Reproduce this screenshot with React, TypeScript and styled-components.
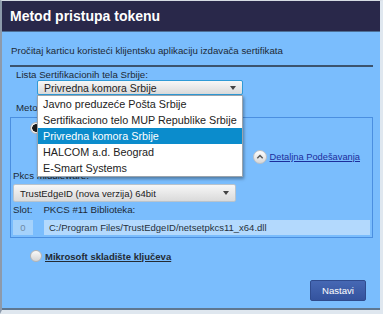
import styled, { createGlobalStyle } from "styled-components";

const GlobalStyle = createGlobalStyle`
  html, body {
    margin: 0;
    padding: 0;
    background: #c8d0da;
  }
  * {
    box-sizing: border-box;
  }
`;

const StyledDialog = styled.section`
  width: 383px;
  height: 314px;
  display: flex;
  flex-direction: column;
  background-color: #7abdfd;
  border-top: 1px solid #d6dce4;
  border-left: 2px solid #8d9aab;
  border-right: 3px solid #dfe7ef;
  border-bottom: 4px solid #dfe7ef;
  box-shadow: inset 0 -2px 0 #5f7790;
  font-family: "Liberation Sans", Arial, sans-serif;
  font-size: 9.7px;
  color: #1d2a36;
`;

const StyledTitleBar = styled.header`
  height: 31px;
  flex-shrink: 0;
  display: flex;
  align-items: center;
  padding-left: 8px;
  background-color: #29284a;
  border-bottom: 1px solid #4d6f96;
  color: #fff;
  font-weight: bold;
  font-size: 14px;
`;

const StyledBody = styled.div`
  flex: 1;
  display: flex;
  flex-direction: column;
  padding: 13px 8px 0 8px;
`;

const StyledIntro = styled.p`
  margin: 0 0 0 1px;
  line-height: 12px;
`;

const StyledDivider = styled.hr`
  margin: 8px 0 0 0;
  width: 363px;
  border: none;
  border-top: 2px solid #3b536e;
`;

const StyledLabel = styled.div<{ $indent?: number; $top?: number; $lh?: number }>`
  margin-left: ${(p) => p.$indent ?? 0}px;
  margin-top: ${(p) => p.$top ?? 0}px;
  line-height: ${(p) => p.$lh ?? 12}px;
  white-space: nowrap;
`;

const StyledSelectWrap = styled.div<{ $indent: number; $width: number; $top?: number }>`
  position: relative;
  margin-left: ${(p) => p.$indent}px;
  margin-top: ${(p) => p.$top ?? 0}px;
  width: ${(p) => p.$width}px;
`;

const StyledSelect = styled.div<{ $focused?: boolean; $height: number; $size: number }>`
  height: ${(p) => p.$height}px;
  display: flex;
  align-items: center;
  justify-content: space-between;
  padding: 0 5px 0 6px;
  background: linear-gradient(#f7f7f7, #dadada);
  border: 1px solid ${(p) => (p.$focused ? "#2f9ad6" : "#b9c3cc")};
  border-radius: 2px;
  color: #222;
  font-size: ${(p) => p.$size}px;
`;

const StyledArrow = styled.span`
  width: 0;
  height: 0;
  border-left: 3px solid transparent;
  border-right: 3px solid transparent;
  border-top: 4px solid #444;
  margin-right: 1px;
`;

const StyledList = styled.ul`
  position: absolute;
  z-index: 5;
  top: 100%;
  left: 0;
  width: 206px;
  margin: 0;
  padding: 0;
  list-style: none;
  background-color: #fff;
  border: 1px solid #9aa4ad;
  box-shadow: 1px 2px 3px rgba(0, 0, 0, 0.35);
  font-size: 10.8px;
`;

const StyledOption = styled.li<{ $selected?: boolean }>`
  height: 16px;
  line-height: 16px;
  padding-left: 5px;
  white-space: nowrap;
  background-color: ${(p) => (p.$selected ? "#0b8ccc" : "transparent")};
  color: ${(p) => (p.$selected ? "#fff" : "#222")};
`;

const StyledFieldset = styled.div`
  margin-top: 3px;
  width: 363px;
  border: 1px solid #4b8fe0;
  display: flex;
  flex-direction: column;
  padding: 4px 0 2px 2px;
`;

const StyledRadio = styled.span<{ $checked?: boolean }>`
  width: 12px;
  height: 12px;
  border-radius: 50%;
  flex-shrink: 0;
  background: ${(p) =>
    p.$checked
      ? "radial-gradient(circle, #1a1a1a 0 3.5px, #f2f2f2 4px)"
      : "linear-gradient(#fafafa, #d4d4d4)"};
  border: 1px solid #b5b5b5;
`;

const StyledRadioRow = styled.div<{ $indent: number; $top?: number }>`
  display: flex;
  align-items: center;
  gap: 3px;
  margin-left: ${(p) => p.$indent}px;
  margin-top: ${(p) => p.$top ?? 0}px;
  height: 12px;
`;

const StyledRadioLabel = styled.span`
  font-weight: bold;
  font-size: 9.5px;
  text-decoration: underline;
  color: #232a33;
`;

const StyledLinkRow = styled.div`
  display: flex;
  justify-content: flex-end;
  align-items: center;
  gap: 3px;
  margin-top: 16px;
  padding-right: 12px;
  height: 14px;
`;

const StyledLink = styled.a`
  color: #1c2d9c;
  font-size: 9.3px;
  text-decoration: underline;
`;

const StyledFieldRow = styled.div<{ $top: number }>`
  display: flex;
  gap: 11px;
  margin-top: ${(p) => p.$top}px;
`;

const StyledInput = styled.div<{ $width: number; $light?: boolean }>`
  width: ${(p) => p.$width}px;
  height: 15px;
  line-height: 15px;
  padding-left: ${(p) => (p.$light ? 0 : 5)}px;
  text-align: ${(p) => (p.$light ? "center" : "left")};
  background-color: ${(p) => (p.$light ? "#a5d2fb" : "#b3d9fd")};
  color: ${(p) => (p.$light ? "#6f8aa6" : "#25303b")};
  font-size: 9.5px;
  white-space: nowrap;
  overflow: hidden;
`;

const StyledFooter = styled.div`
  margin-top: auto;
  margin-bottom: 9px;
  display: flex;
  justify-content: flex-end;
  padding-right: 6px;
`;

const StyledButton = styled.button`
  width: 56px;
  height: 21px;
  border: 1px solid #2f4b8e;
  border-radius: 2px;
  background: linear-gradient(#4668b4, #34539e);
  color: #fff;
  font-family: "Liberation Sans", Arial, sans-serif;
  font-size: 9.6px;
  padding: 0;
`;

const UpIcon = () => (
  <svg width="14" height="14" viewBox="0 0 14 14">
    <defs>
      <linearGradient id="upg" x1="0" y1="0" x2="0" y2="1">
        <stop offset="0" stopColor="#ffffff" />
        <stop offset="1" stopColor="#d6d6d6" />
      </linearGradient>
    </defs>
    <circle cx="7" cy="7" r="6.5" fill="url(#upg)" stroke="#b8bec6" />
    <path d="M4.3 8.3 L7 5.6 L9.7 8.3" fill="none" stroke="#555" strokeWidth="1.4" />
  </svg>
);

const options = [
  "Javno preduzeće Pošta Srbije",
  "Sertifikaciono telo MUP Republike Srbije",
  "Privredna komora Srbije",
  "HALCOM a.d. Beograd",
  "E-Smart Systems",
];

const App = () => {
  return (
    <>
      <GlobalStyle />
      <StyledDialog>
        <StyledTitleBar>Metod pristupa tokenu</StyledTitleBar>
        <StyledBody>
          <StyledIntro>
            Pročitaj karticu koristeći klijentsku aplikaciju izdavača sertifikata
          </StyledIntro>
          <StyledDivider />
          <StyledLabel $indent={6} $top={3} $lh={10}>
            Lista Sertifikacionih tela Srbije:
          </StyledLabel>
          <StyledSelectWrap $indent={27} $width={206}>
            <StyledSelect $focused $height={15} $size={10.5}>
              Privredna komora Srbije
              <StyledArrow />
            </StyledSelect>
            <StyledList>
              {options.map((o) => (
                <StyledOption key={o} $selected={o === "Privredna komora Srbije"}>
                  {o}
                </StyledOption>
              ))}
            </StyledList>
          </StyledSelectWrap>
          <StyledLabel $indent={6} $top={7}>
            Metod pristupa:
          </StyledLabel>
          <StyledFieldset>
            <StyledRadioRow $indent={17}>
              <StyledRadio $checked />
              <StyledRadioLabel>Koristi PKCS #11 modul</StyledRadioLabel>
            </StyledRadioRow>
            <StyledLinkRow>
              <UpIcon />
              <StyledLink>Detaljna Podešavanja</StyledLink>
            </StyledLinkRow>
            <StyledLabel $top={6}>Pkcs middleware:</StyledLabel>
            <StyledSelectWrap $indent={0} $width={223} $top={2}>
              <StyledSelect $height={18} $size={9.5}>
                TrustEdgeID (nova verzija) 64bit
                <StyledArrow />
              </StyledSelect>
            </StyledSelectWrap>
            <StyledFieldRow $top={2}>
              <StyledLabel>Slot:</StyledLabel>
              <StyledLabel>PKCS #11 Biblioteka:</StyledLabel>
            </StyledFieldRow>
            <StyledFieldRow $top={4}>
              <StyledInput $width={20} $light>
                0
              </StyledInput>
              <StyledInput $width={326}>
                C:/Program Files/TrustEdgeID/netsetpkcs11_x64.dll
              </StyledInput>
            </StyledFieldRow>
          </StyledFieldset>
          <StyledRadioRow $indent={20} $top={12}>
            <StyledRadio />
            <StyledRadioLabel>Mikrosoft skladište ključeva</StyledRadioLabel>
          </StyledRadioRow>
          <StyledFooter>
            <StyledButton>Nastavi</StyledButton>
          </StyledFooter>
        </StyledBody>
      </StyledDialog>
    </>
  );
};

export default App;
